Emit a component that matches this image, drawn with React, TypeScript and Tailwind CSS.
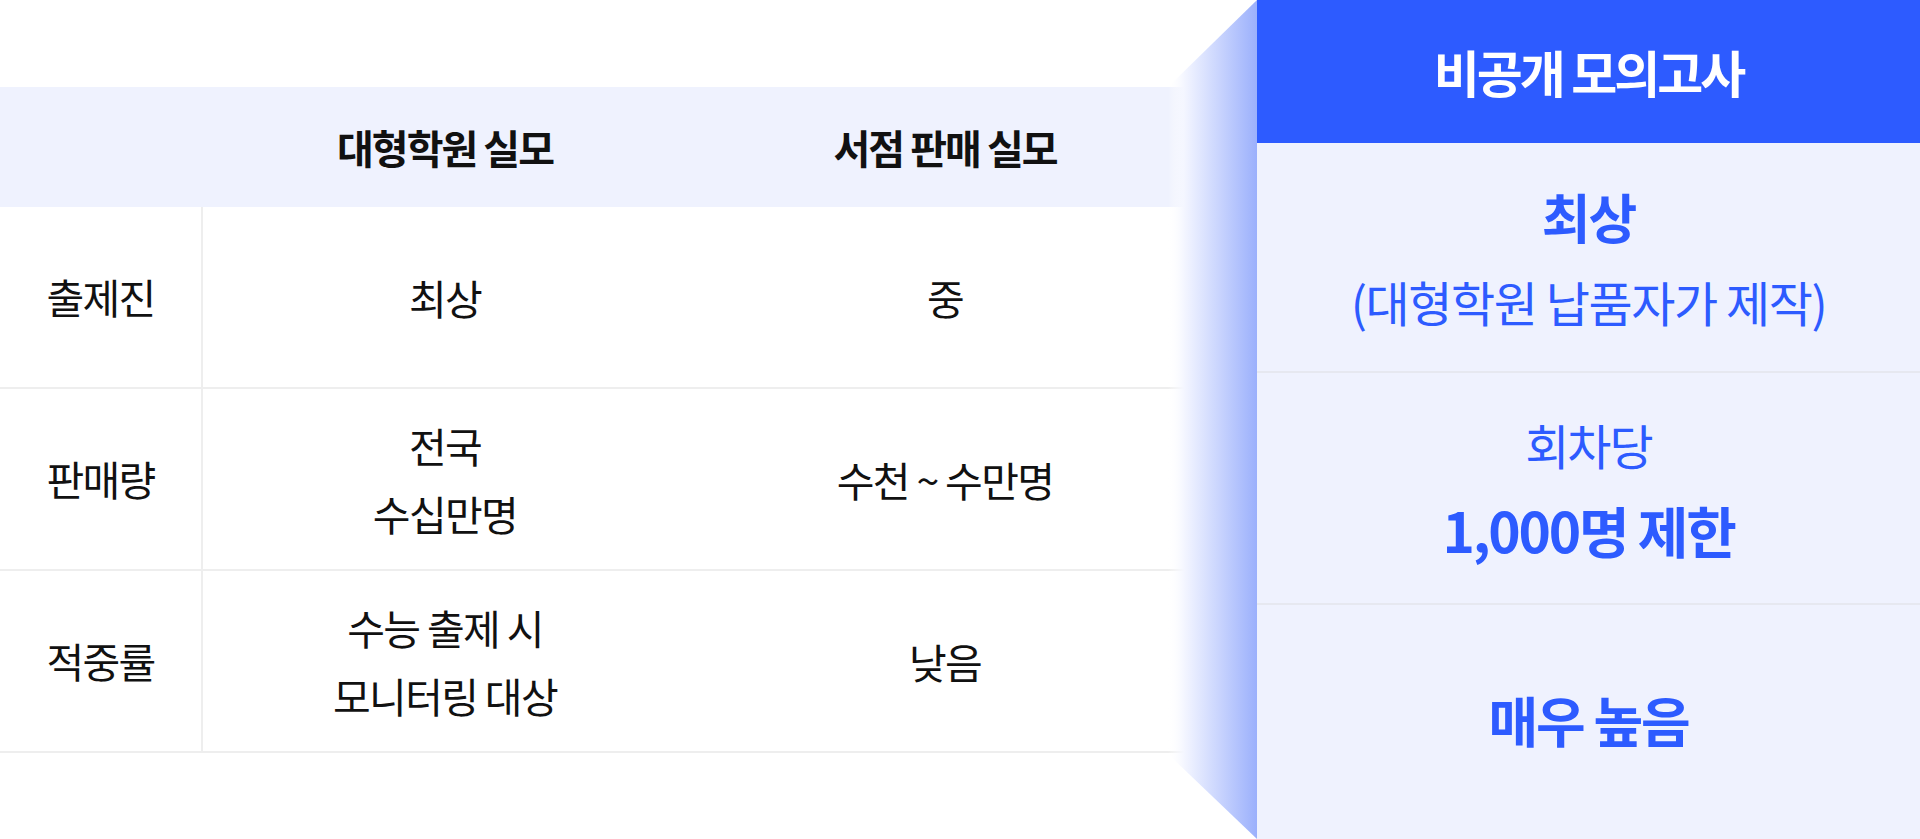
import React from 'react'

const font = { fontFamily: '"Noto Sans CJK KR", "Noto Sans", sans-serif' }

const rows = [
  { label: '출제진', academy: ['최상'], store: ['중'] },
  { label: '판매량', academy: ['전국', '수십만명'], store: ['수천 ~ 수만명'] },
  { label: '적중률', academy: ['수능 출제 시', '모니터링 대상'], store: ['낮음'] },
]

function Cell({ lines }: { lines: string[] }) {
  return (
    <div className="flex flex-col items-center justify-center text-[41px] leading-[68px] tracking-[-0.04em] text-[#111111]">
      {lines.map((l) => (
        <span key={l}>{l}</span>
      ))}
    </div>
  )
}

function Wedge() {
  return (
    <svg
      className="absolute left-[1168px] top-0 h-[839px] w-[89px]"
      viewBox="0 0 89 839"
      preserveAspectRatio="none"
    >
      <defs>
        <linearGradient id="wedge" x1="0" y1="0" x2="1" y2="0">
          <stop offset="0" stopColor="#ffffff" stopOpacity="0" />
          <stop offset="0.18" stopColor="#f4f6ff" stopOpacity="1" />
          <stop offset="1" stopColor="#9bb0fc" />
        </linearGradient>
      </defs>
      <polygon points="0,87 89,0 89,839 0,754" fill="url(#wedge)" />
    </svg>
  )
}

export default function App() {
  return (
    <div className="relative flex h-[839px] w-[1920px] overflow-hidden bg-white" style={font}>
      {/* comparison table */}
      <div className="flex w-[1257px] flex-col pt-[87px]">
        <div className="grid h-[120px] w-[1203px] grid-cols-[203px_484px_516px] items-center bg-[#eff2fe] text-[40px] font-bold tracking-[-0.05em] text-[#111111]">
          <div />
          <div className="text-center">대형학원 실모</div>
          <div className="text-center">서점 판매 실모</div>
        </div>
        {rows.map((r) => (
          <div
            key={r.label}
            className="grid h-[182px] w-[1203px] grid-cols-[203px_484px_516px] border-b-2 border-[#eeeeee]"
          >
            <div className="flex items-center justify-center border-r-2 border-[#eeeeee] text-[41px] tracking-[-0.04em] text-[#111111]">
              {r.label}
            </div>
            <Cell lines={r.academy} />
            <Cell lines={r.store} />
          </div>
        ))}
      </div>

      <Wedge />

      {/* highlighted column */}
      <div className="flex w-[663px] flex-col bg-[#eff2fe] text-[#2d5bff]">
        <div className="flex h-[143px] items-center justify-center bg-[#2d5bff] text-[50px] font-bold tracking-[-0.06em] text-white">
          비공개 모의고사
        </div>
        <div className="flex h-[230px] flex-col items-center justify-center gap-[34px] border-b-2 border-[#e6e8f0]">
          <span className="text-[53px] font-bold leading-none tracking-[-0.04em]">최상</span>
          <span className="text-[48px] leading-none tracking-[-0.03em]">(대형학원 납품자가 제작)</span>
        </div>
        <div className="flex h-[232px] flex-col items-center justify-center gap-[34px] border-b-2 border-[#e6e8f0]">
          <span className="text-[48px] leading-none tracking-[-0.04em]">회차당</span>
          <span className="text-[55px] font-bold leading-none tracking-[-0.04em]">1,000명 제한</span>
        </div>
        <div className="flex flex-1 items-center justify-center pb-[4px]">
          <span className="text-[54px] font-bold leading-none tracking-[-0.04em]">매우 높음</span>
        </div>
      </div>
    </div>
  )
}
